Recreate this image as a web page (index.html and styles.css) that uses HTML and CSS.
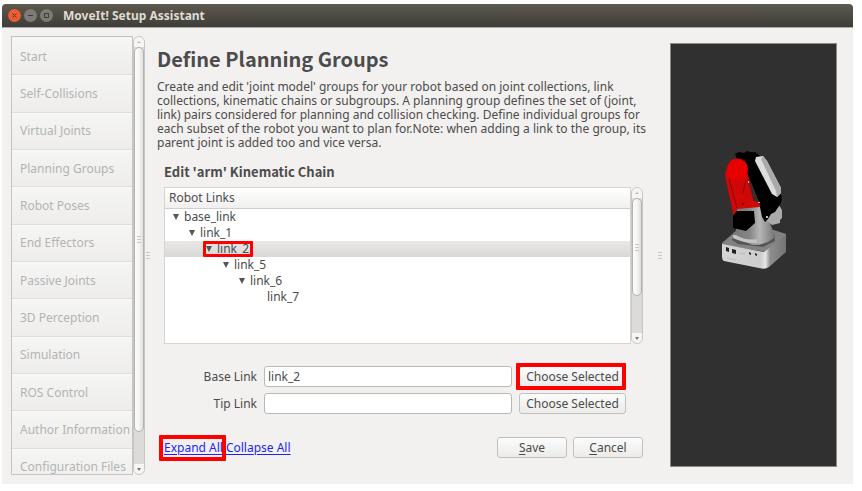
FILE: index.html
```html
<!DOCTYPE html>
<html lang="en">
<head>
<meta charset="utf-8">
<title>MoveIt! Setup Assistant</title>
<link rel="stylesheet" href="styles.css">
</head>
<body>
<div class="window">
  <header class="titlebar">
    <button class="dot dot-close" type="button" aria-label="Close"><svg viewBox="0 0 13 13"><path d="M4.5 4.5l4 4M8.5 4.500l-4 4"/></svg></button>
    <button class="dot" type="button" aria-label="Minimize"><svg viewBox="0 0 13 13"><path d="M4 6.500h5"/></svg></button>
    <button class="dot" type="button" aria-label="Maximize"><svg viewBox="0 0 13 13"><path d="M4.500 4.500h4v4h-4z"/></svg></button>
    <span class="title">MoveIt! Setup Assistant</span>
  </header>
  <div class="body">
    <nav class="sidebar">
      <div class="steps-clip">
        <div class="steps">
          <button type="button" disabled>Start</button>
          <button type="button" disabled>Self-Collisions</button>
          <button type="button" disabled>Virtual Joints</button>
          <button type="button" disabled>Planning Groups</button>
          <button type="button" disabled>Robot Poses</button>
          <button type="button" disabled>End Effectors</button>
          <button type="button" disabled>Passive Joints</button>
          <button type="button" disabled>3D Perception</button>
          <button type="button" disabled>Simulation</button>
          <button type="button" disabled>ROS Control</button>
          <button type="button" disabled>Author Information</button>
          <button type="button" disabled>Configuration Files</button>
        </div>
      </div>
      <div class="scroll scroll-long">
        <span class="cap"><i class="up"></i></span>
        <span class="thumb"><i class="grip"></i></span>
        <span class="cap cap-end"><i class="down"></i></span>
      </div>
    </nav>
    <div class="splitter splitter-thin"><i class="grip"></i></div>
    <main class="main">
      <h1>Define Planning Groups</h1>
      <p class="intro">Create and edit 'joint model' groups for your robot based on joint collections, link<br>collections, kinematic chains or subgroups. A planning group defines the set of (joint,<br>link) pairs considered for planning and collision checking. Define individual groups for<br>each subset of the robot you want to plan for.Note: when adding a link to the group, its<br>parent joint is added too and vice versa.</p>
      <section class="editor">
        <h2>Edit 'arm' Kinematic Chain</h2>
        <div class="tree">
          <div class="tree-view">
            <div class="tree-head">Robot Links</div>
            <ul>
              <li><span class="row"><i class="arrow"></i>base_link</span>
                <ul><li><span class="row"><i class="arrow"></i>link_1</span>
                  <ul><li class="selected"><span class="row"><span class="marked marked-row"><i class="arrow"></i>link_2</span></span>
                    <ul><li><span class="row"><i class="arrow"></i>link_5</span>
                      <ul><li><span class="row"><i class="arrow"></i>link_6</span>
                        <ul><li><span class="row leaf">link_7</span></li></ul>
                      </li></ul>
                    </li></ul>
                  </li></ul>
                </li></ul>
              </li>
            </ul>
          </div>
          <div class="scroll scroll-short">
            <span class="cap"><i class="up"></i></span>
            <span class="thumb"><i class="grip"></i></span>
            <span class="cap cap-end"><i class="down"></i></span>
          </div>
        </div>
        <form class="fields">
          <label for="base">Base Link</label>
          <input id="base" type="text" value="link_2">
          <span class="marked marked-button"><button class="btn" type="button">Choose Selected</button></span>
          <label for="tip">Tip Link</label>
          <input id="tip" type="text">
          <button class="btn" type="button">Choose Selected</button>
        </form>
        <footer class="actions">
          <a class="marked marked-link" href="#expand">Expand All</a>
          <a href="#collapse">Collapse All</a>
          <span class="spacer"></span>
          <button class="btn btn-wide" type="button"><u>S</u>ave</button>
          <button class="btn btn-wide" type="button"><u>C</u>ancel</button>
        </footer>
      </section>
    </main>
    <div class="splitter"><i class="grip"></i></div>
    <aside class="view">
      <svg class="robot" viewBox="0 0 66 118" role="img" aria-label="Robot arm">
        <defs>
          <linearGradient id="col" x1="0" x2="1" y1="0" y2="0"><stop offset="0" stop-color="#777"/><stop offset=".4" stop-color="#858585"/><stop offset=".65" stop-color="#b5b5b5"/><stop offset="1" stop-color="#787878"/></linearGradient>
          <linearGradient id="front" x1="0" x2="1" y1="0" y2="0"><stop offset="0" stop-color="#d6d6d6"/><stop offset=".6" stop-color="#ccc"/><stop offset=".68" stop-color="#e6e6e6"/><stop offset=".75" stop-color="#8e8e8e"/><stop offset="1" stop-color="#747474"/></linearGradient>
        </defs>
        <path fill="#828282" d="M1 92L15 80L53 79L65 83V86L46 101L1 94Z"/>
        <path fill="#555" d="M11 89L13 85L53 81L54 90L42 96L17 93Z"/>
        <path fill="url(#front)" d="M1 93L43 101L65 84V101L48 116Q44 119 38 117L3 110Q1 109 1 106Z"/>
        <path fill="url(#col)" d="M15 57L39 54L45 63L53 82V87Q45 94 31 94L12 86V82L15 80Z"/>
        <path fill="#c4c4c4" d="M15 84Q25 90 36 88V92Q24 93 12 87V84Z"/>
        <path fill="#aaa" d="M44 67L56 51L61 59V67L59 69V72L51 74L46 70Z"/>
        <path fill="#000" d="M13 13L16 8L14 3L18 1L23 2L26 0L29 1L34 1L38 4L42 9L46 12L51 22L58 39L61 46L60 52L54 61L50 63L47 68L44 71L41 66L38 51L31 33L24 19L14 17Z"/>
        <path fill="#ddd" d="M35 6L42 5L46 10L60 37V42L56 46L51 43L34 10Z"/>
        <path fill="#aaa" d="M42 5L46 10L60 37V42L56 46L55 40L40 8Z"/>
        <path fill="#cf0707" d="M6 17L4 22L5 30L13 66L16 64L16 58L39 56L38 51L33 50L27 24L25 18Z"/>
        <circle cx="16.500" cy="18" r="10.500" fill="#e80000"/>
        <path fill="none" stroke="#890808" d="M8 28L16 57M25 28L22 42M27 29L33 50"/>
        <path fill="#000" d="M12 65L16 60L33 60L34 72L25 80L12 77Z"/>
        <path fill="#222" d="M5 96l3 1v4l-3-1zM11 98l4 1v4l-4-1zM28 101l2 1v2l-2-1zM34 102l2 1v2l-2-1z"/>
        <path fill="none" stroke="#bdbdbd" d="M6 107l9 2M18 102l6 1"/>
        <path fill="#bbb" d="M27 30h1v2h-1zM37 51h2v1h-2zM45 65h2v2h-2z"/>
        <circle cx="22" cy="53" r="1" fill="#300"/>
      </svg>
    </aside>
  </div>
</div>
</body>
</html>
```
FILE: styles.css
```css
* { box-sizing: border-box; }

body {
  margin: 0;
  padding: 4px 9px 7px 2px;
  min-height: 100vh;
  display: flex;
  background: #fff;
  color: #4c4c4c;
  font: 12px/14px "Noto Sans", sans-serif;
}

button, input { font: inherit; color: inherit; }
h1, h2, p, ul { margin: 0; padding: 0; }
ul { list-style: none; }
svg { display: block; }

.window {
  flex: 1;
  display: flex;
  flex-direction: column;
  min-width: 0;
  background: #f2f1f0;
  border-radius: 4px 4px 0 0;
  overflow: hidden;
}

.titlebar {
  display: flex;
  align-items: center;
  gap: 3px;
  height: 24px;
  padding: 0 6px;
  background: linear-gradient(#5d594f, #3e3d38);
  border-bottom: 1px solid #aaa9a4;
  color: #dfdbd2;
}
.title { margin-left: 7px; font-weight: 700; }
.dot {
  width: 13px;
  height: 13px;
  padding: 0;
  border: 0;
  border-radius: 50%;
  background: #7d7b74;
}
.dot path { fill: none; stroke: #3e3d38; }
.dot-close { background: #ee5c32; }

.body {
  flex: 1;
  display: flex;
  padding: 8px 16px 9px 9px;
}

.sidebar { flex: none; display: flex; width: 134px; }
.steps-clip {
  flex: 1;
  position: relative;
  overflow: hidden;
  border: 1px solid #c5c4c2;
}
.steps {
  position: absolute;
  inset: 1px 0 -12px;
  display: grid;
  grid-auto-rows: 1fr;
}
.steps button {
  padding: 0 0 0 8px;
  border: 0;
  border-top: 1px solid #fafafa;
  border-bottom: 1px solid #dfdedd;
  background: linear-gradient(#f5f5f4, #eeedec);
  color: #b4b4b3;
  text-align: left;
  white-space: nowrap;
}

.scroll {
  display: flex;
  flex-direction: column;
  width: 12px;
  border: 1px solid #c9c7c4;
  border-radius: 6px;
  background: #dddbd9;
}
.cap {
  display: flex;
  align-items: center;
  justify-content: center;
  height: 10px;
  border-radius: 5px 5px 0 0;
  background: #f6f5f4;
}
.cap-end { margin-top: auto; border-radius: 0 0 5px 5px; }
.up, .down {
  border: 2px solid transparent;
  border-top-width: 0;
  border-bottom: 2px solid #bbb;
}
.down { border-top: 3px solid #777; border-bottom-width: 0; }
.thumb {
  display: flex;
  align-items: center;
  justify-content: center;
  border: 1px solid #b5b2ae;
  border-radius: 5px;
  background: linear-gradient(90deg, #fcfcfc, #f5f5f4 50%, #deddda);
}
.scroll-long .thumb { height: 88%; }
.scroll-short .thumb { height: 98px; }
.grip {
  width: 4px;
  height: 7px;
  background: repeating-linear-gradient(#c9c7c4 0 1px, transparent 1px 3px);
}

.splitter {
  flex: none;
  display: flex;
  align-items: center;
  justify-content: center;
  width: 20px;
}
.splitter-thin { width: 5px; }

.main { flex: 1; min-width: 0; padding: 9px 7px 0; }
h1 {
  font: 700 20px/28px "Noto Sans CJK SC", "Noto Sans", sans-serif;
}
.intro { margin-top: 7px; white-space: nowrap; }
.editor { padding-left: 7px; }
h2 {
  margin-top: 12px;
  font: 700 13px/20px "Noto Sans CJK SC", "Noto Sans", sans-serif;
}

.tree { display: flex; margin-top: 5px; height: 157px; }
.tree-view {
  flex: 1;
  border: 1px solid #d5d4d2;
  background: #fff;
}
.tree-head {
  height: 21px;
  padding: 0 4px;
  line-height: 20px;
  border-bottom: 1px solid #d0cfcd;
  background: linear-gradient(#fff, #f1f0ef);
}
.tree-view li { line-height: 16px; }
.tree .row { display: flex; padding-left: 8px; }
.tree ul ul .row { padding-left: 24px; }
.tree ul ul ul .row { padding-left: 41px; }
.tree ul ul ul ul .row { padding-left: 58px; }
.tree ul ul ul ul ul .row { padding-left: 74px; }
.tree ul ul ul ul ul .leaf { padding-left: 102px; }
.tree .selected > .row { background: linear-gradient(#e9e8e7, #d9d8d6); }
.arrow {
  align-self: center;
  margin-right: 5px;
  border: 3px solid transparent;
  border-top: 6px solid #555;
  border-bottom: 0;
}

.fields {
  display: grid;
  grid-template-columns: 93px 1fr 107px;
  align-items: center;
  gap: 6px 7px;
  margin-top: 22px;
  padding-right: 17px;
}
.fields label { text-align: right; }
.fields input {
  width: 100%;
  height: 21px;
  padding: 0 3px;
  border: 1px solid #bab8b5;
  border-radius: 3px;
  background: #fff;
}
.btn {
  width: 100%;
  height: 21px;
  padding: 0;
  border: 1px solid #c2c0bd;
  border-radius: 3px;
  background: linear-gradient(#fcfcfc, #ecebea);
  white-space: nowrap;
}

.actions {
  display: flex;
  align-items: center;
  gap: 3px;
  margin-top: 23px;
}
.actions a { color: #1f1fff; text-underline-offset: 2px; }
.spacer { flex: 1; }
.btn-wide { width: 70px; }
.btn-wide + .btn-wide { margin-left: 3px; }
.btn u { text-underline-offset: 2px; }

/* Tutorial highlights around the controls to use */
.marked { position: relative; display: flex; }
.marked::after {
  content: "";
  position: absolute;
  border: 4px solid #f00;
  border-radius: 1px;
  pointer-events: none;
}
.marked-row::after { inset: 0 -4px 0 -3px; border-width: 3px; }
.marked-button::after { inset: -3px 0 -3px -3px; }
.marked-link::after { inset: -6px -3px -6px -5px; }

.view {
  flex: none;
  display: flex;
  justify-content: center;
  align-items: flex-start;
  width: 167px;
  margin: 7px 0 8px;
  padding-top: 107px;
  border: 1px solid #8a8a89;
  background: #303030;
}
.robot { width: 66px; height: 118px; }
```
